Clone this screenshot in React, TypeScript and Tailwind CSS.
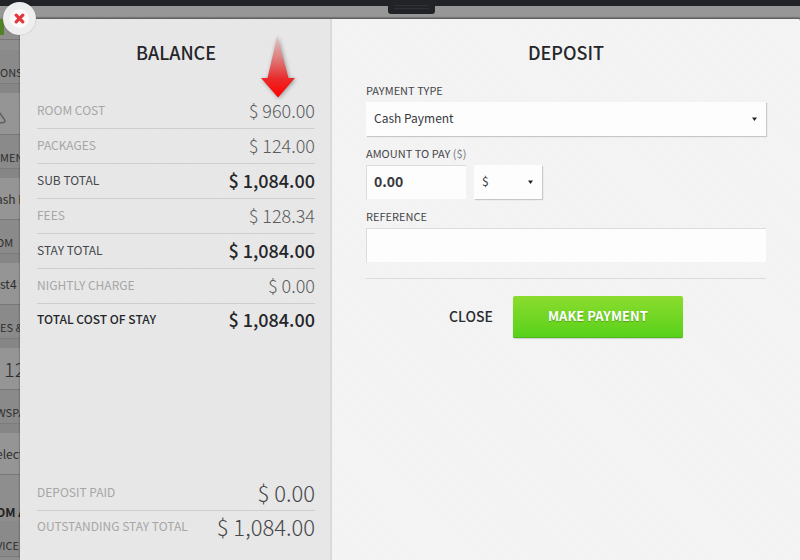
import { useState } from "react";
import type { ReactNode } from "react";

type Row = { label: string; amount: string; tone: "muted" | "subtotal" | "total" };

const COSTS: Row[] = [
  { label: "ROOM COST", amount: "$ 960.00", tone: "muted" },
  { label: "PACKAGES", amount: "$ 124.00", tone: "muted" },
  { label: "SUB TOTAL", amount: "$ 1,084.00", tone: "subtotal" },
  { label: "FEES", amount: "$ 128.34", tone: "muted" },
  { label: "STAY TOTAL", amount: "$ 1,084.00", tone: "subtotal" },
  { label: "NIGHTLY CHARGE", amount: "$ 0.00", tone: "muted" },
  { label: "TOTAL COST OF STAY", amount: "$ 1,084.00", tone: "total" },
];

const PAID = [
  { label: "DEPOSIT PAID", amount: "$ 0.00" },
  { label: "OUTSTANDING STAY TOTAL", amount: "$ 1,084.00" },
];

const LABEL_TONE = {
  muted: "text-[#a6a6a6]",
  subtotal: "text-[#45464a]",
  total: "font-medium text-[#25262a]",
};

const AMOUNT_TONE = {
  muted: "font-light text-[#5c5c5c]",
  subtotal: "font-medium text-[#25262a]",
  total: "font-medium text-[#25262a]",
};

const WEAVE =
  "bg-[repeating-linear-gradient(45deg,rgba(0,0,0,0.012)_0px,rgba(0,0,0,0.012)_1px,transparent_1px,transparent_3px)]";

const ROW = "flex h-[35px] items-center justify-between border-b border-[#cecece] pb-[2px] last:h-8 last:border-b-0";

function WarningIcon() {
  return (
    <svg width="26" height="20" viewBox="0 0 26 20" fill="none" className="-ml-5 shrink-0">
      <path
        d="M11.2 2.4 L2.2 16.2 Q1.2 18.6 3.6 18.8 H22.6 Q25.8 18.6 24.6 15.8 L15 2.4 Q13 0.6 11.2 2.4 Z"
        stroke="#5f5f5f"
        strokeWidth="1.5"
      />
    </svg>
  );
}

const BAND = "flex items-end border-b border-[#7b7b7b] bg-[#8a8a8a] pb-[2px] text-[11px] leading-[18px] text-[#2e2e2e]";

function PageSection({ title, children }: { title: ReactNode; children: ReactNode }) {
  return (
    <section>
      <div className={`h-[34px] ${BAND}`}>{title}</div>
      <div className="h-[9px] bg-[#868686]" />
      <div className="flex h-[42px] items-center border-b border-[#787878] bg-[#959595] text-[12px] text-[#2e2e2e]">
        {children}
      </div>
    </section>
  );
}

function Bleed({ children }: { children: ReactNode }) {
  return <span className="-ml-1">{children}</span>;
}

function BookingPage() {
  return (
    <div className="absolute inset-0 overflow-hidden bg-[#8e8e8e]" aria-hidden="true">
      <div className="h-[6px] bg-[#222327]" />
      <div className="h-[11px] bg-[#979797]" />
      <div className="h-[2px] bg-[#8b8b8b]" />
      <div className="mb-[10px] flex h-[21px] items-start border-b border-[#777777]">
        <div className="h-4 w-1 bg-[#548125]" />
      </div>
      <div className="whitespace-nowrap">
        <PageSection title="ONS">
          <WarningIcon />
        </PageSection>
        <PageSection title="MEN">
          <Bleed>ash P</Bleed>
        </PageSection>
        <PageSection title={<Bleed>OM</Bleed>}>
          <span>st4</span>
        </PageSection>
        <PageSection title="ES &">
          <span className="pl-1 text-[20px] font-light">12</span>
        </PageSection>
        <PageSection title={<Bleed>WSPA</Bleed>}>
          <Bleed>elect</Bleed>
        </PageSection>
        <div className="flex h-[46px] items-end text-[12px] leading-[18px] font-bold text-[#222222]">
          <Bleed>OM A</Bleed>
        </div>
        <div className={`h-9 ${BAND}`}>
          <Bleed>VICE</Bleed>
        </div>
      </div>
    </div>
  );
}

function Handle() {
  return (
    <div className="absolute top-0 left-[388px] flex h-[14px] w-[47px] flex-col justify-end gap-[2px] rounded-b-[3px] bg-[#222327] px-[6px] pb-[5px]">
      <div className="h-px bg-[#303136]" />
      <div className="h-px bg-[#303136]" />
    </div>
  );
}

function Arrow() {
  return (
    <svg
      className="absolute top-[16px] right-8 drop-shadow-[1px_1px_2px_rgba(0,0,0,0.35)]"
      width="40"
      height="66"
      viewBox="0 0 40 66"
      aria-hidden="true"
    >
      <defs>
        <linearGradient id="arrowFill" x1="0" y1="0" x2="0" y2="1">
          <stop offset="0" stopColor="#e4c4c4" />
          <stop offset="0.35" stopColor="#dc8080" />
          <stop offset="0.7" stopColor="#ea2a2a" />
          <stop offset="1" stopColor="#ff0000" />
        </linearGradient>
      </defs>
      <path d="M19.3 1 L30.5 43 H37 L20 62.5 L3 43 H9.5 Z" fill="url(#arrowFill)" />
    </svg>
  );
}

function Caret() {
  return (
    <svg
      className="pointer-events-none absolute top-[15px] right-[9px]"
      width="5"
      height="4"
      viewBox="0 0 5 4"
      aria-hidden="true"
    >
      <path d="M0 0.5 H5 L2.5 4 Z" fill="#222222" />
    </svg>
  );
}

const HEADING = "text-center text-[18px] leading-7 font-medium text-[#25262a]";
const LABEL = "block pb-[2px] text-[11px] leading-5 text-[#45464a]";
const SELECT =
  "h-[34px] w-full appearance-none bg-[#fdfdfd] px-2 pb-[2px] text-[12px] text-[#38393d] shadow-[1px_1px_1px_rgba(0,0,0,0.18)] outline-none";
const INPUT =
  "h-[34px] border-t border-l border-[#dcdcdc] bg-[#fdfdfd] px-[7px] pb-[3px] text-[14px] text-[#38393d] outline-none";

export default function App() {
  const [amount, setAmount] = useState("0.00");
  const [reference, setReference] = useState("");

  return (
    <div className="relative flex min-h-screen overflow-hidden pt-[19px] pl-5 font-['Noto_Sans_CJK_SC','Noto_Sans',sans-serif]">
      <BookingPage />
      <Handle />

      <div
        role="dialog"
        aria-label="Balance and deposit"
        className="relative flex flex-1 shadow-[0_-1px_2px_rgba(0,0,0,0.45)]"
      >
        <section
          className={`relative flex w-[312px] shrink-0 flex-col border-r-2 border-[#dadada] bg-[#e8e8e8] pt-[19px] pr-[15px] pb-[17px] pl-[17px] ${WEAVE}`}
        >
          <h2 className={`mb-7 ${HEADING}`}>BALANCE</h2>
          <Arrow />
          <dl>
            {COSTS.map((row) => (
              <div key={row.label} className={ROW}>
                <dt className={`text-[12px] ${LABEL_TONE[row.tone]}`}>{row.label}</dt>
                <dd className={`text-[18px] ${AMOUNT_TONE[row.tone]}`}>{row.amount}</dd>
              </div>
            ))}
          </dl>
          <dl className="mt-auto">
            {PAID.map((row) => (
              <div key={row.label} className={ROW}>
                <dt className="text-[12px] text-[#a6a6a6]">{row.label}</dt>
                <dd className="text-[22px] font-light text-[#45464a]">{row.amount}</dd>
              </div>
            ))}
          </dl>
        </section>

        <section className={`flex-1 rounded-tr-[2px] bg-[#f4f4f4] px-[34px] pt-[19px] ${WEAVE}`}>
          <h2 className={`mb-[14px] ${HEADING}`}>DEPOSIT</h2>
          <form onSubmit={(e) => e.preventDefault()}>
            <div className="flex flex-col gap-[7px]">
              <div>
                <label htmlFor="type" className={LABEL}>
                  PAYMENT TYPE
                </label>
                <div className="relative">
                  <select id="type" className={SELECT}>
                    <option>Cash Payment</option>
                  </select>
                  <Caret />
                </div>
              </div>
              <div>
                <label htmlFor="amount" className={LABEL}>
                  AMOUNT TO PAY <span className="text-[#77787c]">($)</span>
                </label>
                <div className="flex gap-2">
                  <input
                    id="amount"
                    value={amount}
                    onChange={(e) => setAmount(e.target.value)}
                    className={`w-[100px] font-bold ${INPUT}`}
                  />
                  <div className="relative w-[68px]">
                    <select aria-label="Currency" className={SELECT}>
                      <option>$</option>
                    </select>
                    <Caret />
                  </div>
                </div>
              </div>
              <div>
                <label htmlFor="reference" className={LABEL}>
                  REFERENCE
                </label>
                <input
                  id="reference"
                  value={reference}
                  onChange={(e) => setReference(e.target.value)}
                  className={`block w-full ${INPUT}`}
                />
              </div>
            </div>
            <div className="mt-4 flex items-center justify-center gap-5 border-t border-[#dcdcdc] pt-[17px]">
              <button type="button" className="pb-[2px] text-[14px] font-medium text-[#2b2c30]">
                CLOSE
              </button>
              <button
                type="submit"
                className="h-[42px] w-[170px] rounded-[2px] bg-linear-to-b from-[#8bdc2e] to-[#55d119] pb-[2px] text-[13px] font-bold text-white shadow-[inset_0_-1px_0_#4fb81e,0_1px_1px_rgba(0,0,0,0.15)] [text-shadow:0_1px_1px_rgba(0,0,0,0.25)]"
              >
                MAKE PAYMENT
              </button>
            </div>
          </form>
        </section>
      </div>

      <button
        type="button"
        aria-label="Close dialog"
        className="absolute top-[2px] left-[3px] flex size-[33px] items-center justify-center rounded-full border-[7px] border-[#eeeeee] bg-[#fafafa] shadow-[0_0_1px_rgba(0,0,0,0.4)]"
      >
        <svg width="11" height="11" viewBox="0 0 11 11" className="shrink-0">
          <path d="M2.2 2.2 L8.8 8.8 M8.8 2.2 L2.2 8.8" stroke="#e2373b" strokeWidth="3.2" strokeLinecap="round" />
        </svg>
      </button>
    </div>
  );
}
